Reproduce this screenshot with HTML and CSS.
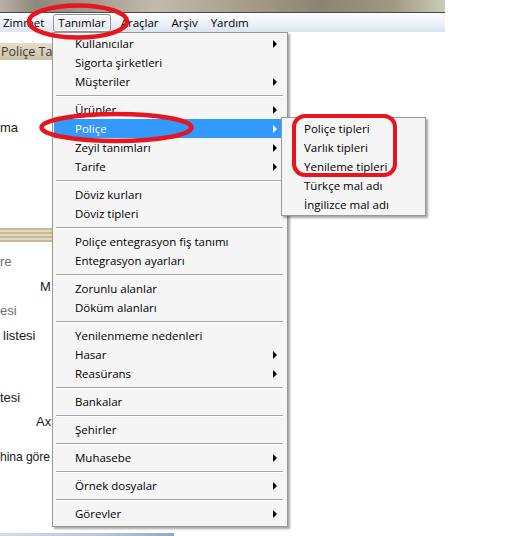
FILE: index.html
```html
<!DOCTYPE html>
<html lang="tr">
<head>
<meta charset="utf-8">
<title>Tanımlar menüsü</title>
<link rel="stylesheet" href="styles.css">
</head>
<body>
<div class="screen">
  <div class="titlebar"></div>
  <div class="menubar">
    <span class="mb-item">Zimmet</span>
    <span class="mb-item active">Tanımlar</span>
    <span class="mb-item">Araçlar</span>
    <span class="mb-item">Arşiv</span>
    <span class="mb-item">Yardım</span>
  </div>
  <div class="workspace">
    <div class="left">
      <div class="pane-header">Poliçe Ta</div>
      <div class="ltext gap-ma">ma</div>
      <div class="stripes"></div>
      <div class="ltext gray gap-re">re</div>
      <div class="ltext indent-m gap-m">M</div>
      <div class="ltext gray gap-esi">esi</div>
      <div class="ltext indent-l gap-listesi">listesi</div>
      <div class="ltext gap-tesi">tesi</div>
      <div class="ltext indent-ax gap-ax">Ax</div>
      <div class="ltext narrow gap-gore">hina göre</div>
    </div>
    <div class="bottom-bar"></div>

    <div class="menu main-menu">
      <div class="mi">Kullanıcılar<i class="arrow"></i></div>
      <div class="mi">Sigorta şirketleri</div>
      <div class="mi">Müşteriler<i class="arrow"></i></div>
      <div class="sep"></div>
      <div class="mi">Ürünler<i class="arrow"></i></div>
      <div class="mi hl">Poliçe<i class="arrow white"></i></div>
      <div class="mi">Zeyil tanımları<i class="arrow"></i></div>
      <div class="mi">Tarife<i class="arrow"></i></div>
      <div class="sep"></div>
      <div class="mi">Döviz kurları</div>
      <div class="mi">Döviz tipleri</div>
      <div class="sep"></div>
      <div class="mi">Poliçe entegrasyon fiş tanımı</div>
      <div class="mi">Entegrasyon ayarları</div>
      <div class="sep"></div>
      <div class="mi">Zorunlu alanlar</div>
      <div class="mi">Döküm alanları</div>
      <div class="sep"></div>
      <div class="mi">Yenilenmeme nedenleri</div>
      <div class="mi">Hasar<i class="arrow"></i></div>
      <div class="mi">Reasürans<i class="arrow"></i></div>
      <div class="sep"></div>
      <div class="mi">Bankalar</div>
      <div class="sep"></div>
      <div class="mi">Şehirler</div>
      <div class="sep"></div>
      <div class="mi">Muhasebe<i class="arrow"></i></div>
      <div class="sep"></div>
      <div class="mi">Örnek dosyalar<i class="arrow"></i></div>
      <div class="sep"></div>
      <div class="mi">Görevler<i class="arrow"></i></div>
    </div>

    <div class="menu sub-menu">
      <div class="mi">Poliçe tipleri</div>
      <div class="mi">Varlık tipleri</div>
      <div class="mi">Yenileme tipleri</div>
      <div class="mi">Türkçe mal adı</div>
      <div class="mi">İngilizce mal adı</div>
    </div>
  </div>

  <svg class="annotations" width="531" height="536" viewBox="0 0 531 536">
    <ellipse cx="78" cy="21.5" rx="49" ry="16" fill="none" stroke="#e8141e" stroke-width="4.5"/>
    <ellipse cx="116.5" cy="127.5" rx="75" ry="13.5" fill="none" stroke="#e8141e" stroke-width="4.5"/>
    <rect x="294" y="116" width="101" height="59" rx="11" ry="11" fill="none" stroke="#e8141e" stroke-width="4"/>
  </svg>
</div>
</body>
</html>
```

FILE: styles.css
```css
* { box-sizing: border-box; }
html, body {
  margin: 0;
  padding: 0;
  background: #ffffff;
}
.screen {
  position: relative;
  width: 531px;
  height: 536px;
  overflow: hidden;
  background: #ffffff;
  font-family: "Open Sans", "Noto Sans", sans-serif;
}
.titlebar {
  width: 445px;
  height: 12px;
  background: linear-gradient(90deg, #b9b1a5 0%, #8f877b 8%, #a39a8c 20%, #c2baac 35%, #a89d8a 55%, #8d8372 72%, #a0977f 88%, #c8cdb9 100%);
}
.menubar {
  width: 445px;
  height: 20px;
  border-top: 1px solid #4a4a4a;
  background: linear-gradient(180deg, #fbfcfe 0%, #eef2f8 50%, #dce4f1 100%);
  display: flex;
  align-items: flex-start;
  gap: 13px;
  padding-left: 3px;
  font-size: 11.5px;
  color: #000;
}
.mb-item {
  height: 18px;
  margin-top: 1px;
  line-height: 18px;
  white-space: nowrap;
}
.mb-item.active {
  padding: 0 4px;
  margin-left: -4px;
  margin-right: -3px;
  border: 1px solid #8e8f8f;
  border-radius: 3px;
  line-height: 16px;
  background: linear-gradient(180deg, #f7f8fa 0%, #e6e9ee 100%);
  box-shadow: inset 0 0 0 1px #ffffff;
}
.workspace {
  position: relative;
  display: flow-root;
  height: 504px;
}
.left {
  display: flow-root;
  width: 52px;
  overflow: hidden;
  font-family: "Liberation Sans", Arial, sans-serif;
  font-size: 13px;
  color: #1a1a1a;
}
.pane-header {
  margin-top: 11px;
  height: 17px;
  line-height: 17px;
  padding-left: 1px;
  white-space: nowrap;
  font-family: "Open Sans", sans-serif;
  font-size: 12.5px;
  color: #3a3a3a;
  background: linear-gradient(180deg, #e6dfcf 0%, #d6cbb2 60%, #ccc0a5 100%);
}
.ltext {
  height: 16px;
  line-height: 16px;
  white-space: nowrap;
}
.ltext.gray { color: #6e6e6e; }
.ltext.narrow { font-size: 12.2px; letter-spacing: -0.1px; }
.indent-m { padding-left: 40px; }
.indent-l { padding-left: 3px; }
.indent-ax { padding-left: 36px; }
.gap-ma { margin-top: 60px; }
.stripes {
  margin-top: 92px;
  height: 14px;
  background: repeating-linear-gradient(180deg, #c9b993 0px, #c9b993 2px, #e2d8c3 2px, #e2d8c3 4px);
}
.gap-re { margin-top: 12px; }
.gap-m { margin-top: 9px; }
.gap-esi { margin-top: 8px; }
.gap-listesi { margin-top: 9px; }
.gap-tesi { margin-top: 46px; }
.gap-ax { margin-top: 8px; }
.gap-gore { margin-top: 19px; }
.bottom-bar {
  margin-top: 68px;
  width: 174px;
  height: 3px;
  background: linear-gradient(90deg, #d3dbe6 0%, #b8c6da 60%, #93a8c8 100%);
}

.menu {
  position: absolute;
  background: #f5f5f5;
  border: 1px solid #979797;
  box-shadow: 2px 2px 2px rgba(0, 0, 0, 0.35);
  font-family: "Open Sans", "Noto Sans", sans-serif;
  font-size: 11.5px;
  color: #000;
  z-index: 2;
}
.main-menu {
  left: 52px;
  top: 0;
  width: 236px;
  padding: 1px 1px 3px 1px;
}
.sub-menu {
  left: 281px;
  top: 85px;
  width: 145px;
  padding: 1px;
  z-index: 3;
}
.mi {
  height: 19px;
  line-height: 19px;
  padding-left: 21px;
  padding-right: 9px;
  display: flex;
  align-items: center;
  white-space: nowrap;
}
.mi.hl {
  background: #3399ff;
  color: #ffffff;
}
.arrow {
  margin-left: auto;
  width: 0;
  height: 0;
  border-top: 4px solid transparent;
  border-bottom: 4px solid transparent;
  border-left: 4px solid #000;
}
.arrow.white { border-left-color: #ffffff; }
.sep {
  height: 9px;
  margin: 0 3px 0 2px;
  background: linear-gradient(180deg, transparent 0, transparent 4px, #a6a6a6 4px, #a6a6a6 5px, #ffffff 5px, #ffffff 6px, transparent 6px);
}
.annotations {
  position: absolute;
  left: 0;
  top: 0;
  z-index: 5;
  pointer-events: none;
}
```
